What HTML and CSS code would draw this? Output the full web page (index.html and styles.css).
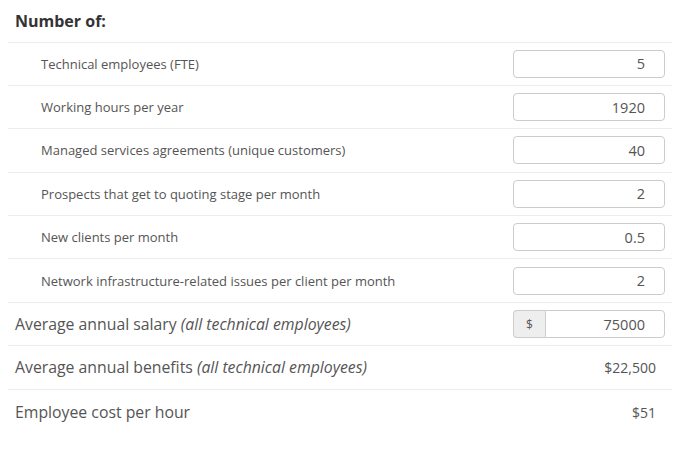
FILE: index.html
```html
<!DOCTYPE html>
<html lang="en">
<head>
  <meta charset="UTF-8" />
  <meta name="viewport" content="width=device-width, initial-scale=1.0"/>
  <title>Cost Calculator</title>
  <link rel="stylesheet" href="styles.css">
</head>
<body>

  <div class="calc">
    <div class="row heading">Number of:</div>

    <div class="row sub">
      <label for="fte">Technical employees (FTE)</label>
      <input type="text" id="fte" value="5" />
    </div>
    <div class="row sub">
      <label for="hours">Working hours per year</label>
      <input type="text" id="hours" value="1920" />
    </div>
    <div class="row sub">
      <label for="msa">Managed services agreements (unique customers)</label>
      <input type="text" id="msa" value="40" />
    </div>
    <div class="row sub">
      <label for="prospects">Prospects that get to quoting stage per month</label>
      <input type="text" id="prospects" value="2" />
    </div>
    <div class="row sub">
      <label for="clients">New clients per month</label>
      <input type="text" id="clients" value="0.5" />
    </div>
    <div class="row sub">
      <label for="issues">Network infrastructure-related issues per client per month</label>
      <input type="text" id="issues" value="2" />
    </div>

    <div class="row main">
      <label for="salary">Average annual salary <em>(all technical employees)</em></label>
      <div class="input-group">
        <span class="addon">$</span>
        <input type="text" id="salary" value="75000" />
      </div>
    </div>
    <div class="row main">
      <span>Average annual benefits <em>(all technical employees)</em></span>
      <span class="value">$22,500</span>
    </div>
    <div class="row main last">
      <span>Employee cost per hour</span>
      <span class="value">$51</span>
    </div>
  </div>

</body>
</html>
```

FILE: styles.css
```css
body {
  font-family: 'Open Sans', 'Liberation Sans', sans-serif;
  background: #ffffff;
  margin: 0;
  padding: 0;
  color: #555;
}

.calc {
  width: 664px;
  margin-left: 8px;
}

.row {
  display: flex;
  align-items: center;
  justify-content: space-between;
  height: 42.4px;
  border-top: 1px solid #ececec;
  padding: 0 7px 0 7px;
}

.heading {
  border-top: none;
  height: 41.5px;
  font-size: 16px;
  font-weight: bold;
  color: #333;
}

.sub label {
  font-size: 13px;
  padding-left: 26px;
}

.main {
  font-size: 15.8px;
}

.main em {
  font-style: italic;
}

input {
  width: 152px;
  height: 28px;
  box-sizing: border-box;
  border: 1px solid #ccc;
  border-radius: 4px;
  padding: 0 19px 0 9px;
  font-family: inherit;
  font-size: 14.5px;
  color: #555;
  text-align: right;
}

.input-group {
  display: flex;
  width: 152px;
  height: 28px;
}

.input-group .addon {
  width: 32px;
  box-sizing: border-box;
  background: #eeeeee;
  border: 1px solid #ccc;
  border-right: none;
  border-radius: 4px 0 0 4px;
  font-size: 12px;
  color: #555;
  display: flex;
  align-items: center;
  justify-content: center;
}

.input-group input {
  width: 120px;
  border-radius: 0 4px 4px 0;
}

.value {
  font-size: 14px;
  padding-right: 9px;
}

.last {
  height: 45px;
}
```
